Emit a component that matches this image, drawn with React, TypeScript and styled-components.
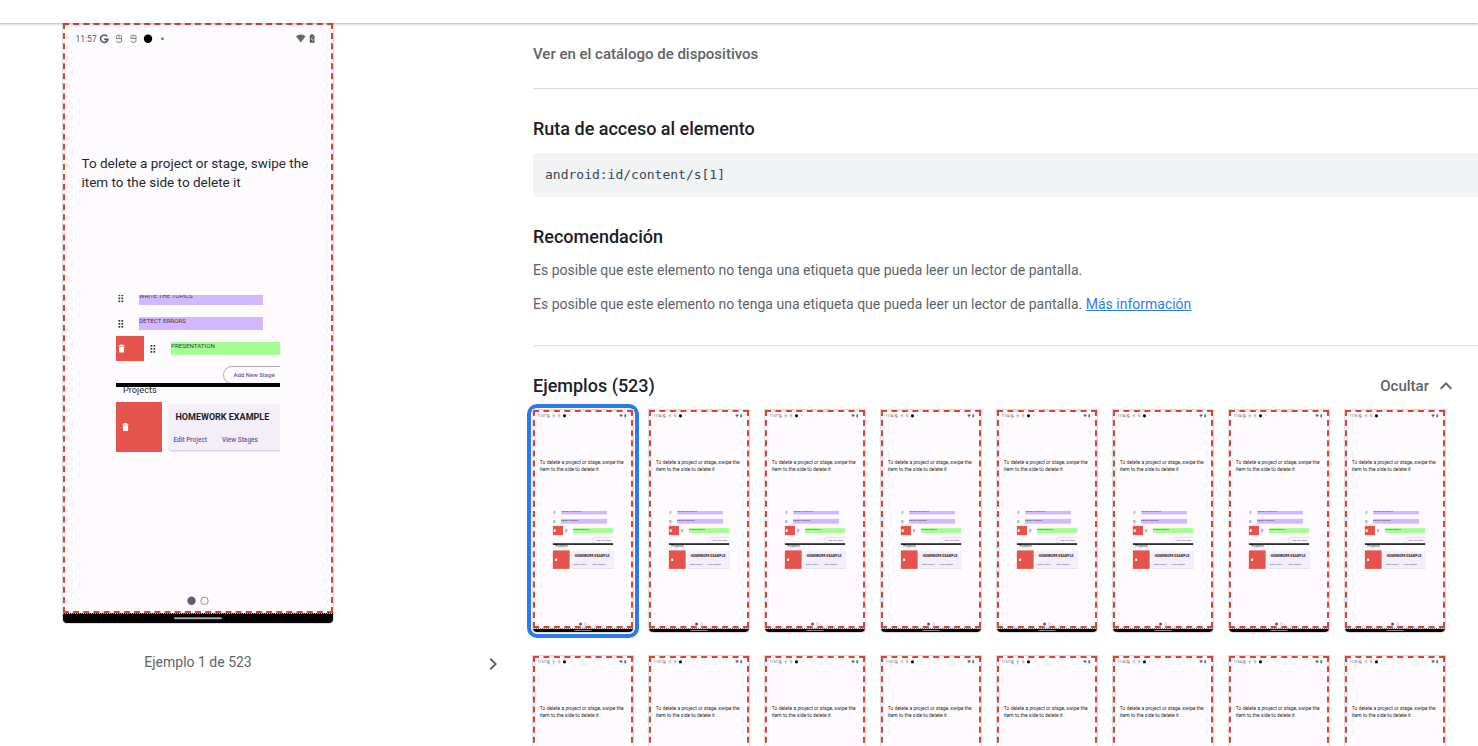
import React from "react";
import styled, { createGlobalStyle, css } from "styled-components";

const Global = createGlobalStyle`
  * { box-sizing: border-box; }
  body { margin: 0; background: #fff; color: #5f6368; font-family: Roboto, "Liberation Sans", sans-serif; font-size: 14px; line-height: 20px; overflow: hidden; }
`;

const Page = styled.div`
  display: flex;
  flex-direction: column;
  height: 100vh;
  overflow: hidden;
`;

const TopBar = styled.header`
  flex: none;
  height: 23px;
  background: #fff;
  position: relative;
  z-index: 1;
  box-shadow: 0 1px 2px rgba(60, 64, 67, 0.3), 0 1px 3px rgba(60, 64, 67, 0.15);
`;

const Body = styled.main`
  flex: 1;
  min-height: 0;
  display: flex;
  padding-left: 63px;
`;

const PreviewColumn = styled.section`
  flex: none;
  width: 470px;
`;

const Shot = styled.span`
  display: block;
  position: relative;
  width: 100%;
  border-radius: 0 0 4px 4px;
  overflow: hidden;
  box-shadow: 0 0 0 1px #dadce0;
  > svg { display: block; width: 100%; height: auto; }
`;

const Highlight = styled.span<{ $bottom: number }>`
  position: absolute;
  inset: 0 0 ${(p) => p.$bottom}px 0;
  outline: 1px dotted rgba(255, 255, 255, 0.7);
  border: 2px dashed #e24331;
`;

const Large = styled.div`
  width: 270px;
`;

const Pager = styled.div`
  display: flex;
  align-items: flex-start;
  margin-top: 29px;
`;

const PagerLabel = styled.span`
  width: 270px;
  text-align: center;
`;

const IconButton = styled.button`
  display: flex;
  margin-left: auto;
  margin-right: 28px;
  padding: 0;
  border: 0;
  background: none;
  color: #5f6368;
  cursor: pointer;
`;

const Details = styled.div`
  flex: 1;
  min-width: 0;
`;

const Section = styled.section<{ $last?: boolean }>`
  ${(p) => !p.$last && css`border-bottom: 1px solid #dadce0;`}
`;

const CatalogSection = styled(Section)`
  padding: 21px 0 24px;
`;

const InfoSection = styled(Section)`
  padding: 28px 0 31px;
`;

const ExamplesSection = styled(Section)`
  padding-top: 28px;
`;

const CatalogLink = styled.a`
  display: block;
  width: fit-content;
  color: #5f6368;
  font: 500 15px/20px "Google Sans", Roboto, sans-serif;
  text-decoration: none;
`;

const Title = styled.h2`
  margin: 0;
  color: #202124;
  font: 500 18px/24px "Google Sans", Roboto, sans-serif;
`;

const CodeBox = styled.code`
  display: block;
  margin: 12px 0 28px;
  padding: 12px;
  border-radius: 4px 0 0 4px;
  background: #f1f3f4;
  color: #37474f;
  font: 13px/20px "DejaVu Sans Mono", monospace;
`;

const Text = styled.p`
  margin: 11px 0 0;
  & + & { margin-top: 14px; }
`;

const MoreLink = styled.a`
  color: #2f7bee;
`;

const ExamplesHead = styled.div`
  display: flex;
  justify-content: space-between;
  align-items: center;
  padding-right: 20px;
`;

const ToggleButton = styled.button`
  display: flex;
  align-items: center;
  gap: 5px;
  padding: 0;
  border: 0;
  background: none;
  color: #5f6368;
  font: 500 15px/20px "Google Sans", Roboto, sans-serif;
  cursor: pointer;
`;

const Grid = styled.div`
  display: grid;
  grid-template-columns: repeat(auto-fill, 100px);
  gap: 24px 16px;
  margin-top: 12px;
`;

const Thumb = styled.button<{ $selected?: boolean }>`
  display: block;
  width: 100px;
  padding: 0;
  border: 0;
  border-radius: 4px;
  background: none;
  cursor: pointer;
  ${(p) => p.$selected && css`outline: 4px solid #2b79ea; outline-offset: 2px;`}
`;

const Chevron = ({ d }: { d: string }) => (
  <svg width="24" height="24" viewBox="0 0 24 24" fill="currentColor" aria-hidden="true">
    <path d={d} />
  </svg>
);

const Grip = ({ x, y }: { x: number; y: number }) => (
  <g fill="#333">
    {[0, 3, 6].map((dy) => (
      <g key={dy}>
        <rect x={x} y={y + dy} width="1.7" height="1.7" />
        <rect x={x + 3} y={y + dy} width="1.7" height="1.7" />
      </g>
    ))}
  </g>
);

const Trash = ({ x, y }: { x: number; y: number }) => (
  <path
    transform={`translate(${x} ${y})`}
    fill="#fff"
    d="M0 .8h1.6L2.2 0h1.6l.6.8H6v1H0zM.4 2.3h5.2V7a.9.9 0 0 1-.9.9H1.3A.9.9 0 0 1 .4 7z"
  />
);

const Badge = ({ x }: { x: number }) => (
  <g transform={`translate(${x} 12)`} fill="none" stroke="#777" strokeWidth="0.9">
    <path d="M.5 4V1.300a1 1 0 0 1 1-1h3a1 1 0 0 1 1 1V5.800a1.500 1.500 0 0 1-1.500 1.500H2A1.500 1.500 0 0 1 .5 5.800M.5 3.500h5M2.200 1.900h1.600" />
  </g>
);

const PhoneScreen = ({ time }: { time: string }) => (
  <svg viewBox="0 0 270 600" fontFamily="Roboto, sans-serif" role="img" aria-label="Pantalla">
    <rect width="270" height="600" fill="#fefbff" />
    <text x="12.500" y="19" fontSize="8.500" fill="#555">{time}</text>
    <path d="M44.200 13.500a3.700 3.700 0 1 0 .7 2.900H41.200" fill="none" stroke="#555" strokeWidth="1.600" />
    <Badge x={53} />
    <Badge x={67.500} />
    <circle cx="85" cy="15.800" r="4.200" fill="#000" />
    <circle cx="99.500" cy="15.800" r="1.300" fill="#666" />
    <path d="M233 13.200q4.800-3.600 9.600 0l-4.800 6.200z" fill="#666" />
    <path d="M246.800 12.300h1.300v-1h2v1h1.300v7.400h-4.600z" fill="#555" />
    <path d="M249.500 13.500l-1.400 3h2l-1 2" fill="none" stroke="#eee" strokeWidth="0.600" />
    <g fontSize="13.500" fill="#29282c">
      <text x="18.500" y="145">To delete a project or stage, swipe the</text>
      <text x="18.500" y="164">item to the side to delete it</text>
    </g>

    <svg x="53" y="272" width="164" height="160" viewBox="53 272 164 160">
      <g fill="#d4b8ff">
        <rect x="76" y="272" width="124" height="10" />
        <rect x="76" y="294" width="124" height="13" />
      </g>
      <rect x="108" y="319" width="109" height="13" fill="#a3ff94" />
      <Grip x={55.500} y={271.500} />
      <Grip x={55.500} y={297} />
      <Grip x={87.500} y={322} />
      <g fontSize="6.200" fill="#3e3650">
        <text x="76" y="275">WRITE THE TOPICS</text>
        <text x="76" y="300">DETECT ERRORS</text>
        <text x="108" y="325">PRESENTATION</text>
      </g>
      <rect x="53" y="313" width="28" height="25" fill="#e5534d" />
      <Trash x={55.500} y={321.500} />
      <rect x="160.500" y="343.500" width="90" height="17" rx="8.500" fill="none" stroke="#8f8a96" strokeWidth="0.700" />
      <text x="170.500" y="354" fontSize="6" fontWeight="500" fill="#6b56a6">Add New Stage</text>
      <text x="60" y="369.500" fontSize="9.200" fill="#29282c">Projects</text>
      <rect x="53" y="360" width="164" height="4" fill="#000" />
      <rect x="53" y="379" width="46" height="50" fill="#e5534d" />
      <Trash x={59.500} y={400} />
      <rect x="105" y="382" width="130" height="46.500" rx="4" fill="#d9d4df" />
      <rect x="105" y="381" width="130" height="46" rx="4" fill="#f4eef9" />
      <text x="112.500" y="397" fontSize="9" fontWeight="700" fill="#222026">HOMEWORK EXAMPLE</text>
      <g fontSize="6.500" fontWeight="500" fill="#6b56a6">
        <text x="110.500" y="419">Edit Project</text>
        <text x="159" y="419">View Stages</text>
      </g>
    </svg>

    <circle cx="128.500" cy="577.800" r="4.200" fill="#625b71" />
    <circle cx="141.500" cy="577.800" r="3.700" fill="none" stroke="#938f99" strokeWidth="1" />
    <rect y="590" width="270" height="10" fill="#000" />
    <rect x="111" y="594.200" width="48" height="2" rx="1" fill="#aaa" />
  </svg>
);

const times = [
  "11:57", "11:54", "11:57", "11:54", "11:54", "11:54", "11:54", "11:55",
  "11:57", "11:57", "11:57", "11:57", "11:57", "11:54", "11:54", "11:55",
];

export default function App() {
  return (
    <>
      <Global />
      <Page>
        <TopBar />
        <Body>
          <PreviewColumn>
            <Large>
              <Shot>
                <PhoneScreen time="11:57" />
                <Highlight $bottom={10} />
              </Shot>
            </Large>
            <Pager>
              <PagerLabel>Ejemplo 1 de 523</PagerLabel>
              <IconButton aria-label="Siguiente">
                <Chevron d="M8.600 16.600 13.200 12 8.600 7.400 10 6l6 6-6 6z" />
              </IconButton>
            </Pager>
          </PreviewColumn>
          <Details>
            <CatalogSection>
              <CatalogLink href="#catalogo">Ver en el catálogo de dispositivos</CatalogLink>
            </CatalogSection>
            <InfoSection>
              <Title>Ruta de acceso al elemento</Title>
              <CodeBox>android:id/content/s[1]</CodeBox>
              <Title>Recomendación</Title>
              <Text>Es posible que este elemento no tenga una etiqueta que pueda leer un lector de pantalla.</Text>
              <Text>
                Es posible que este elemento no tenga una etiqueta que pueda leer un lector de pantalla.{" "}
                <MoreLink href="#mas">Más información</MoreLink>
              </Text>
            </InfoSection>
            <ExamplesSection $last>
              <ExamplesHead>
                <Title>Ejemplos (523)</Title>
                <ToggleButton>
                  Ocultar
                  <Chevron d="M7.400 15.400 12 10.800l4.600 4.600L18 14l-6-6-6 6z" />
                </ToggleButton>
              </ExamplesHead>
              <Grid>
                {times.map((time, i) => (
                  <Thumb key={i} $selected={i === 0} aria-label={`Ejemplo ${i + 1}`}>
                    <Shot>
                      <PhoneScreen time={time} />
                      <Highlight $bottom={4} />
                    </Shot>
                  </Thumb>
                ))}
              </Grid>
            </ExamplesSection>
          </Details>
        </Body>
      </Page>
    </>
  );
}
